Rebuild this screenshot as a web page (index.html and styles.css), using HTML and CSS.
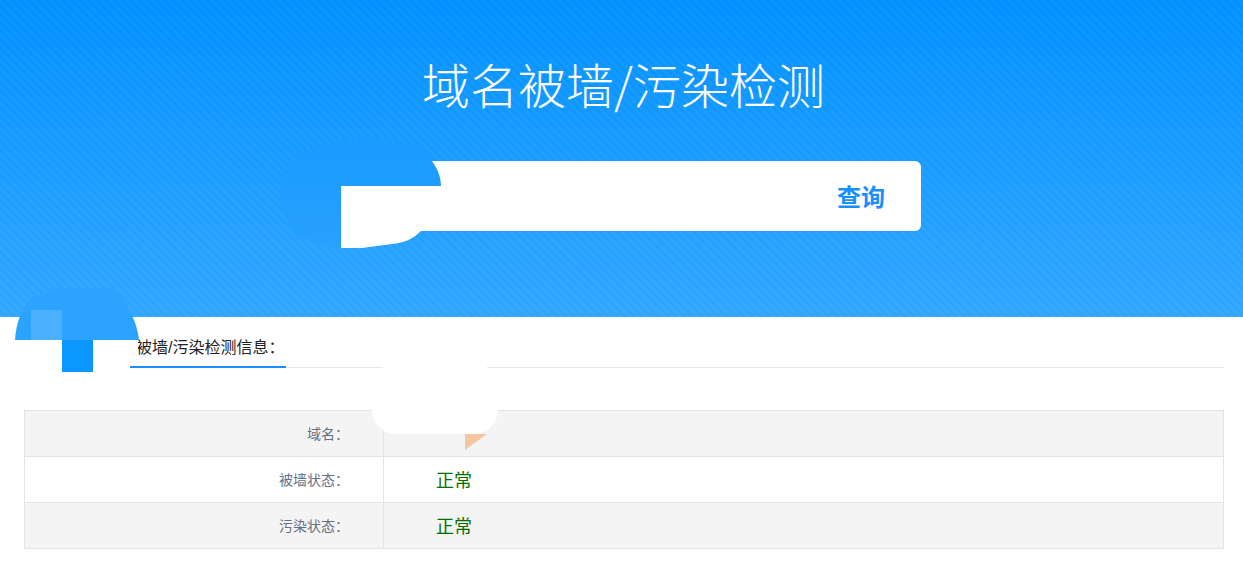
FILE: index.html
```html
<!DOCTYPE html>
<html>
<head>
    <meta charset="UTF-8">
    <title>域名被墙/污染检测</title>
    <link rel="stylesheet" href="styles.css">
</head>
<body>
    <div class="hero">
        <h1>域名被墙/污染检测</h1>
        <div class="search">
            <input class="search-input" type="text">
            <button class="search-btn">查询</button>
        </div>
    </div>

    <div class="content">
        <div class="tabs">
            <div class="tab">域名被墙/污染检测信息：</div>
        </div>
        <table class="info">
            <tr>
                <th>域名：</th>
                <td></td>
            </tr>
            <tr>
                <th>被墙状态：</th>
                <td class="ok">正常</td>
            </tr>
            <tr>
                <th>污染状态：</th>
                <td class="ok">正常</td>
            </tr>
        </table>
    </div>

    <!-- 打码区域 -->
    <svg class="mask" width="1243" height="580" viewBox="0 0 1243 580">
        <defs>
            <linearGradient id="blobFill" gradientUnits="userSpaceOnUse" x1="0" y1="138" x2="0" y2="250">
                <stop offset="0" stop-color="#1a9aff"/>
                <stop offset="1" stop-color="#28a1ff"/>
            </linearGradient>
        </defs>
        <path fill="url(#blobFill)" d="M280 190C281 165 300 146 345 140C375 136 410 136 425 153C436 164 441 175 441 186L341 186L341 248C315 248 295 235 285 218C281 210 280 200 280 190Z"/>
        <path fill="#fff" d="M341 186L441 186L447 191L447 231L421 231C412 240 403 243 392 244L362 248L341 248Z"/>
        <path fill="#fff" d="M24 340H138V364H130V372H24Z"/>
        <path fill="#2ca3ff" d="M15 340C16 322 22 308 31 298L60 288H110C125 298 137 320 139 340Z"/>
        <rect fill="#4bb0ff" x="31" y="310" width="31" height="30"/>
        <rect fill="#0b97ff" x="62" y="340" width="31" height="32"/>
        <path fill="#fff" d="M383 367C383 362 385 360 390 360H480C485 360 487 362 487 367L498 410A24 24 0 0 1 474 434H396A24 24 0 0 1 372 410Z"/>
        <path fill="#f4c6a1" d="M465 434H487L465 450Z"/>
    </svg>
</body>
</html>
```

FILE: styles.css
```css
body {
    margin: 0;
    font-family: "Liberation Sans", "Noto Sans CJK SC", sans-serif;
    background: white;
    overflow: hidden;
}

.hero {
    height: 317px;
    padding-top: 48px;
    box-sizing: border-box;
    background:
        repeating-linear-gradient(45deg, rgba(255, 255, 255, 0.04) 0 3px, transparent 3px 6px),
        linear-gradient(#0090ff, #30a6ff);
}

.hero h1 {
    margin: 0;
    padding-left: 4px;
    text-align: center;
    color: white;
    font-family: "Noto Sans CJK SC", sans-serif;
    font-size: 48px;
    line-height: 70px;
    font-weight: 300;
}

.search {
    display: flex;
    width: 599px;
    height: 70px;
    margin: 43px auto 0;
    background: white;
    border-radius: 6px;
}

.search-input {
    flex: 1;
    border: none;
    outline: none;
    background: transparent;
}

.search-btn {
    width: 120px;
    padding-bottom: 2px;
    border: none;
    background: transparent;
    color: #1890ff;
    font-family: inherit;
    font-size: 24px;
    font-weight: bold;
}

.content {
    padding: 0 19px 0 24px;
}

.tabs {
    height: 50px;
    border-bottom: 1px solid #e4e7ed;
    display: flex;
    align-items: flex-end;
}

.tab {
    margin-left: 70px;
    padding: 0 2px 0 10px;
    height: 36px;
    line-height: 32px;
    font-size: 16px;
    color: #222;
    border-bottom: 2px solid #1890ff;
    margin-bottom: -1px;
    box-sizing: border-box;
}

.info {
    width: 100%;
    margin-top: 42px;
    border-collapse: collapse;
}

.info th,
.info td {
    height: 43px;
    padding: 0 0 2px;
    border: 1px solid #e4e4e4;
}

.info tr:nth-child(odd) {
    background: #f4f4f4;
}

.info th {
    width: 324px;
    padding-right: 34px;
    text-align: right;
    font-size: 14px;
    font-weight: normal;
    color: #667085;
}

.info td {
    padding-left: 52px;
    font-size: 18px;
}

.ok {
    color: #007000;
}

.mask {
    position: absolute;
    left: 0;
    top: 0;
    pointer-events: none;
}
```
